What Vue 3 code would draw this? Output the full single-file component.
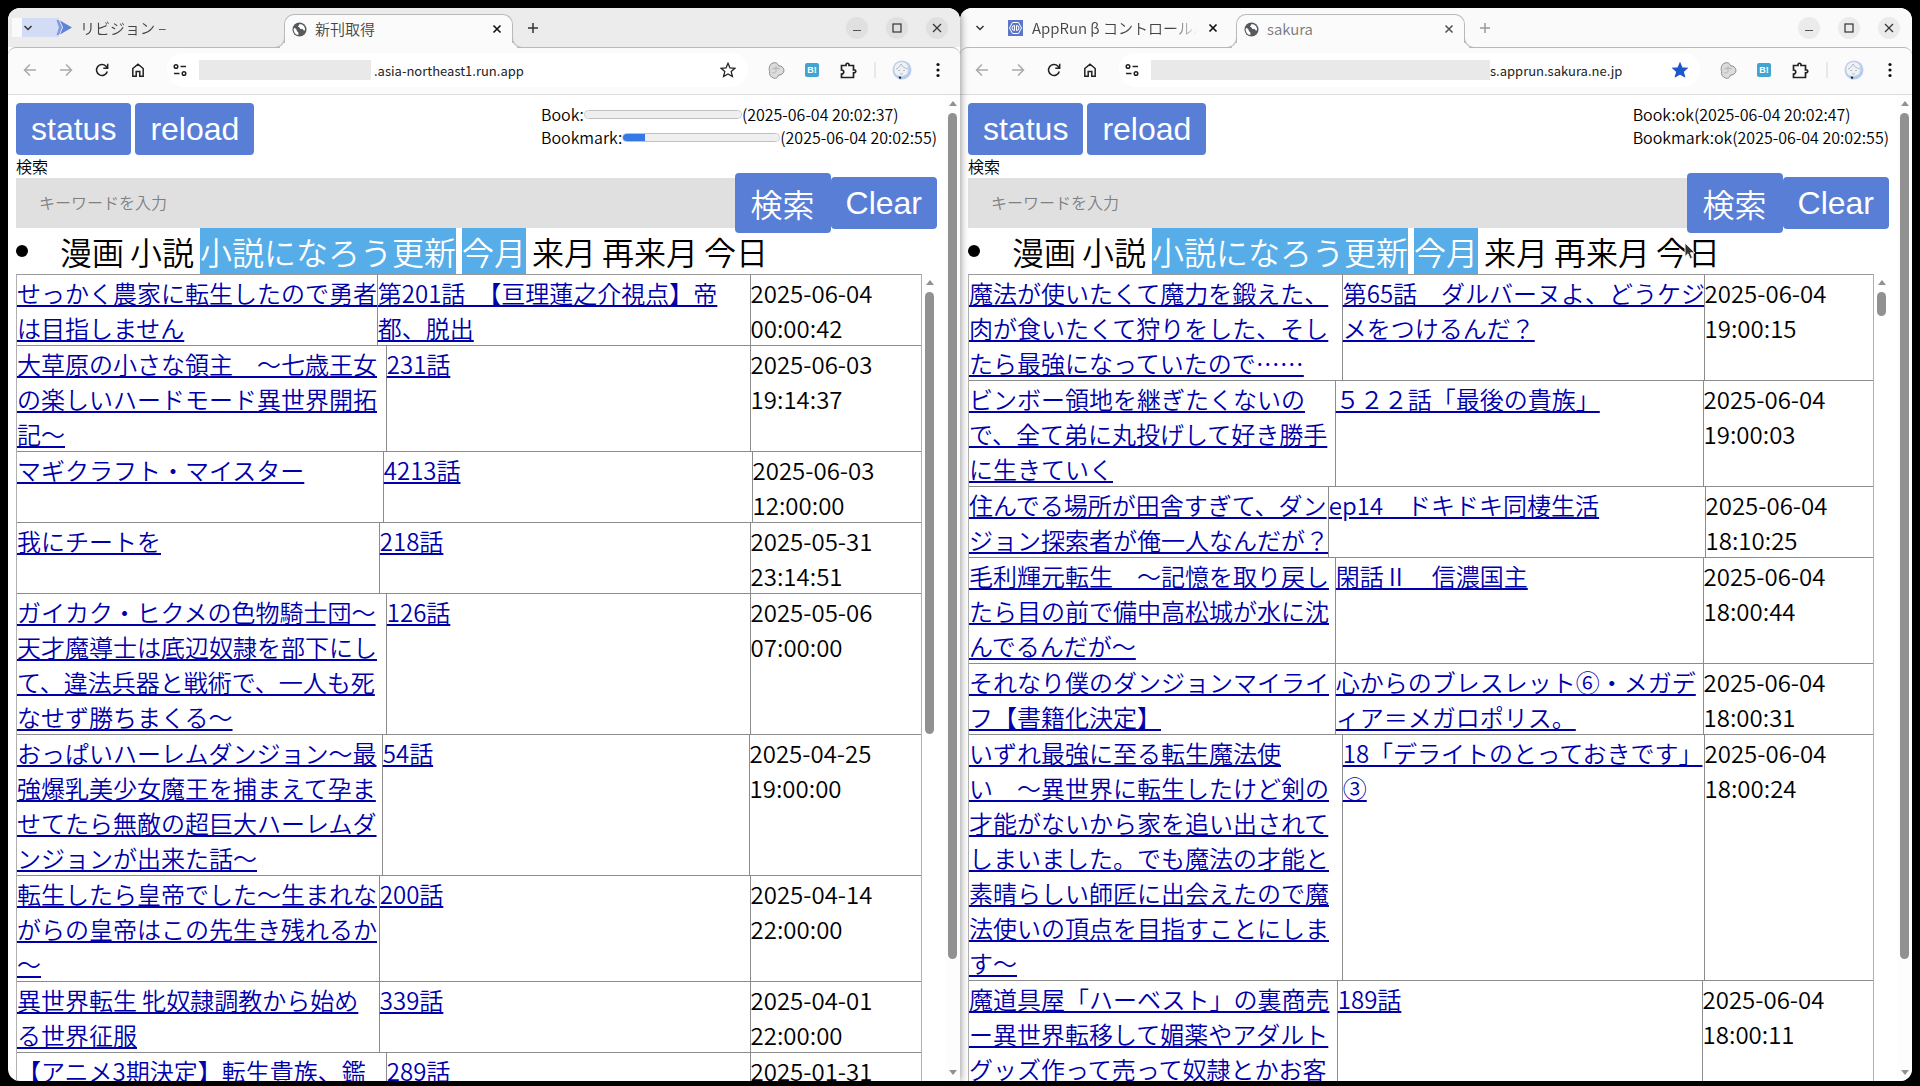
<script setup>
const filters = ['漫画', '小説', '小説になろう更新', '今月', '来月', '再来月', '今日']
const activeFilters = ['小説になろう更新', '今月']

const windows = [
  {
    id: 'cloudrun',
    focused: false,
    otherTab: 'リビジョン –',
    tab: '新刊取得',
    host: '.asia-northeast1.run.app',
    starred: false,
    thumb: 56,
    status: [
      { name: 'Book', progress: 0, time: '2025-06-04 20:02:37' },
      { name: 'Bookmark', progress: 14, time: '2025-06-04 20:02:55' },
    ],
    rows: [
      { cols: [361, 373, 171], title: 'せっかく農家に転生したので勇者は目指しません', episode: '第201話　【亘理蓮之介視点】帝都、脱出', date: '2025-06-04', time: '00:00:42' },
      { cols: [370, 364, 171], title: '大草原の小さな領主　～七歳王女の楽しいハードモード異世界開拓記～', episode: '231話', date: '2025-06-03', time: '19:14:37' },
      { cols: [367, 369, 169], title: 'マギクラフト・マイスター', episode: '4213話', date: '2025-06-03', time: '12:00:00' },
      { cols: [363, 371, 171], title: '我にチートを', episode: '218話', date: '2025-05-31', time: '23:14:51' },
      { cols: [370, 364, 171], title: 'ガイカク・ヒクメの色物騎士団～天才魔導士は底辺奴隷を部下にして、違法兵器と戦術で、一人も死なせず勝ちまくる～', episode: '126話', date: '2025-05-06', time: '07:00:00' },
      { cols: [366, 367, 172], title: 'おっぱいハーレムダンジョン～最強爆乳美少女魔王を捕まえて孕ませてたら無敵の超巨大ハーレムダンジョンが出来た話～', episode: '54話', date: '2025-04-25', time: '19:00:00' },
      { cols: [363, 371, 171], title: '転生したら皇帝でした～生まれながらの皇帝はこの先生き残れるか～', episode: '200話', date: '2025-04-14', time: '22:00:00' },
      { cols: [363, 371, 171], title: '異世界転生 牝奴隷調教から始め\nる世界征服', episode: '339話', date: '2025-04-01', time: '22:00:00' },
      { cols: [370, 364, 171], title: '【アニメ3期決定】転生貴族、鑑', episode: '289話', date: '2025-01-31', time: '' },
    ],
  },
  {
    id: 'apprun',
    focused: true,
    otherTab: 'AppRun β コントロールパネル',
    tab: 'sakura',
    host: 's.apprun.sakura.ne.jp',
    starred: true,
    thumb: 3,
    status: [
      { name: 'Book', result: 'ok', time: '2025-06-04 20:02:47' },
      { name: 'Bookmark', result: 'ok', time: '2025-06-04 20:02:55' },
    ],
    rows: [
      { cols: [374, 362, 169], title: '魔法が使いたくて魔力を鍛えた、肉が食いたくて狩りをした、そしたら最強になっていたので……', episode: '第65話　ダルバーヌよ、どうケジメをつけるんだ？', date: '2025-06-04', time: '19:00:15' },
      { cols: [367, 368, 170], title: 'ビンボー領地を継ぎたくないので、全て弟に丸投げして好き勝手に生きていく', episode: '５２２話「最後の貴族」', date: '2025-06-04', time: '19:00:03' },
      { cols: [360, 377, 168], title: '住んでる場所が田舎すぎて、ダンジョン探索者が俺一人なんだが？', episode: 'ep14　ドキドキ同棲生活', date: '2025-06-04', time: '18:10:25' },
      { cols: [367, 368, 170], title: '毛利輝元転生　～記憶を取り戻したら目の前で備中高松城が水に沈んでるんだが～', episode: '閑話Ⅱ　信濃国主', date: '2025-06-04', time: '18:00:44' },
      { cols: [367, 368, 170], title: 'それなり僕のダンジョンマイライフ【書籍化決定】', episode: '心からのブレスレット⑥・メガディア＝メガロポリス。', date: '2025-06-04', time: '18:00:31' },
      { cols: [374, 362, 169], title: 'いずれ最強に至る転生魔法使\nい　～異世界に転生したけど剣の才能がないから家を追い出されてしまいました。でも魔法の才能と素晴らしい師匠に出会えたので魔法使いの頂点を目指すことにします～', episode: '18「デライトのとっておきです」③', date: '2025-06-04', time: '18:00:24' },
      { cols: [369, 365, 171], title: '魔道具屋「ハーベスト」の裏商売ー異世界転移して媚薬やアダルトグッズ作って売って奴隷とかお客', episode: '189話', date: '2025-06-04', time: '18:00:11' },
    ],
  },
]
</script>

<template>
  <div class="desktop">
    <section v-for="win in windows" :key="win.id" class="window" :class="[win.id, { focused: win.focused }]">
      <header class="tabstrip">
        <button class="tab-search" aria-label="タブを検索">
          <svg width="10" height="10" viewBox="0 0 10 10"><path d="M1.5 3l3.5 3.5L8.5 3" fill="none" stroke="#333" stroke-width="1.5" /></svg>
        </button>
        <div class="tab idle">
          <span class="slot">
            <svg v-if="win.id === 'cloudrun'" width="28" height="19" viewBox="0 0 28 19">
              <rect width="15" height="19" fill="#d2dcf4" />
              <path d="M12.5 2h2.5l3 7.5-3 7.5h-2.5l2.5-7.5z" fill="#7f9adf" />
              <path d="M16 2.5 28 9.5 16 16.5 19 9.500z" fill="#5f83d8" />
            </svg>
            <svg v-else width="15" height="16" viewBox="0 0 15 16">
              <rect width="15" height="16" fill="#5c77c9" />
              <path d="M4.5 2.5h6L13.5 8l-3 5.5h-6L1.5 8z" fill="none" stroke="#fff" stroke-width="1" />
              <path d="M6.5 5.5a2.500 2.500 0 0 0 0 5zM8.500 5.500a2.500 2.500 0 0 1 0 5z" fill="none" stroke="#fff" stroke-width="1" />
            </svg>
          </span>
          <span class="tab-title fade">{{ win.otherTab }}</span>
          <button v-if="win.focused" class="close" aria-label="閉じる">
            <svg width="10" height="10" viewBox="0 0 10 10"><path d="M1.5 1.5l7 7M8.5 1.5l-7 7" stroke="#111" stroke-width="1.7" /></svg>
          </button>
        </div>
        <div class="tab active">
          <svg width="15" height="15" viewBox="0 0 16 16">
            <circle cx="8" cy="8" r="7.5" fill="#56595e" />
            <path d="M2 6.5c2 .2 3 1.5 3.200 2.800.2 1.200 1.600 1 1.700 2.300L6.700 14C4 13.500 1.700 11 1.800 8z" fill="#fff" />
            <path d="M8 2c.2 1.500-1.700 1.600-1.500 2.900.2 1 1.800.5 2 1.700.1 1 1.500 1.300 2.200.6 1 .1 1 1.600 2.200 1.900l1-.3C14.200 5 12 2.200 8 2z" fill="#fff" />
          </svg>
          <span class="tab-title">{{ win.tab }}</span>
          <button class="close" aria-label="閉じる">
            <svg width="10" height="10" viewBox="0 0 10 10"><path d="M1.5 1.5l7 7M8.5 1.5l-7 7" stroke="currentColor" stroke-width="1.6" /></svg>
          </button>
        </div>
        <button class="new-tab" aria-label="新しいタブ">
          <svg width="12" height="12" viewBox="0 0 12 12"><path d="M6 1v10M1 6h10" stroke="currentColor" stroke-width="1.5" /></svg>
        </button>
        <div class="controls">
          <button aria-label="最小化"><svg width="10" height="10" viewBox="0 0 10 10"><path d="M1 7.5h8" stroke="#555" stroke-width="1.2" /></svg></button>
          <button aria-label="最大化"><svg width="10" height="10" viewBox="0 0 10 10"><rect x="1" y="1" width="8" height="8" fill="none" stroke="#333" stroke-width="1.2" /></svg></button>
          <button aria-label="閉じる"><svg width="10" height="10" viewBox="0 0 10 10"><path d="M1 1l8 8M9 1l-8 8" stroke="#333" stroke-width="1.2" /></svg></button>
        </div>
      </header>

      <div class="toolbar">
        <button class="tool dim" aria-label="戻る"><svg width="14" height="14" viewBox="0 0 14 14"><path d="M13 7H2M7 1.5 1.5 7 7 12.5" /></svg></button>
        <button class="tool dim" aria-label="進む"><svg width="14" height="14" viewBox="0 0 14 14"><path d="M1 7h11M7 1.5 12.5 7 7 12.5" /></svg></button>
        <button class="tool" aria-label="再読み込み"><svg width="14" height="14" viewBox="0 0 14 14"><path d="M12.3 8.5A5.5 5.5 0 1 1 11 3.2L12.5 5M12.7.8V5.2H8.3" /></svg></button>
        <button class="tool" aria-label="ホーム"><svg width="14" height="14" viewBox="0 0 14 14"><path d="M1.8 5.5 7 1.2l5.200 4.300v7.700H8.800V8.500H5.200v4.700H1.800z" /></svg></button>
        <div class="omnibox">
          <button class="site" aria-label="サイト情報"><svg width="14" height="14" viewBox="0 0 14 14"><circle cx="3" cy="3.5" r="1.8" /><path d="M7.5 3.5H13M1 10.5h5.5" /><circle cx="11" cy="10.5" r="1.8" /></svg></button>
          <span class="masked"></span>
          <input class="address" type="text" :value="win.host" aria-label="アドレス" />
          <button class="star" aria-label="ブックマーク">
            <svg width="16" height="16" viewBox="0 0 16 16"><path d="M8 1.3l2 4.600 5 .4-3.800 3.300 1.200 4.900L8 11.900l-4.400 2.600 1.200-4.900L1 6.300l5-.4z" :fill="win.starred ? '#1d57c9' : 'none'" :stroke="win.starred ? '#1d57c9' : '#222'" stroke-width="1.3" /></svg>
          </button>
        </div>
        <button class="tool" aria-label="拡張機能 1">
          <svg width="17" height="17" viewBox="0 0 17 17"><path d="M5 1C8 0 10 1.5 10.5 3.8 13 3.5 16 5.5 16 8.5s-3 4.700-5.500 4.500C10 15.500 8 17 5.500 16 2.500 15 1 12.500 1.600 9.500.5 6 1.500 2 5 1z" fill="#dcdcdc" stroke="#8c8c8c" stroke-width="1" /><path d="M8 4v5c0 2-3 3-4 1M4 7c2-1 6-1 8 0" fill="none" stroke="#b4b4b4" stroke-width="1" /></svg>
        </button>
        <button class="tool" aria-label="はてなブックマーク"><span class="hatena">B!</span></button>
        <button class="tool" aria-label="拡張機能"><svg width="17" height="17" viewBox="0 0 17 17"><path d="M1.5 3.5H6c-.3-3 3.300-3 3 0h4.500v4.300c3-.3 3 3.300 0 3V15.500h-12V12c3 .2 3-4.300 0-4z" stroke-width="1.7" /></svg></button>
        <span class="divider"></span>
        <button class="tool" aria-label="プロフィール">
          <svg width="20" height="20" viewBox="0 0 20 20"><circle cx="10" cy="10" r="9.5" fill="#b5cdf3" stroke="none" /><path d="M2 11C1 5 5 1.5 9.5 1.7 14 1.5 17.5 5 16.5 10.5 16 15 13 16 9 16.5 5 16 3 15 2 11z" fill="#eef1f5" stroke="#c6cfdb" stroke-width="1" /><path d="M4 9c3-1 4-3 5-5 1 3 4 4 7 5M6 10.500h2M11 10.500h2M8 13.500q1.500 1 3 0" fill="none" stroke="#b4bcc8" stroke-width="1" /><path d="M6.500 16.500l1.500 3L9.500 17z" fill="#111" stroke="none" /></svg>
        </button>
        <button class="tool" aria-label="メニュー"><svg width="4" height="16" viewBox="0 0 4 16"><g fill="#111" stroke="none"><circle cx="2" cy="2.5" r="1.6" /><circle cx="2" cy="8" r="1.6" /><circle cx="2" cy="13.5" r="1.6" /></g></svg></button>
      </div>

      <div class="viewport">
        <main class="page">
          <div class="actions">
            <div class="buttons">
              <button class="btn">status</button>
              <button class="btn">reload</button>
            </div>
            <div class="status">
              <div v-for="s in win.status" :key="s.name" class="status-line">
                <span>{{ s.name }}:</span>
                <span v-if="s.result">{{ s.result }}</span>
                <progress v-else :value="s.progress" max="100" :aria-label="s.name"></progress>
                <span>({{ s.time }})</span>
              </div>
            </div>
          </div>
          <form class="search" @submit.prevent>
            <label :for="win.id + '-keyword'">検索</label>
            <div class="search-row">
              <input :id="win.id + '-keyword'" type="text" placeholder="キーワードを入力" />
              <button class="btn ja" type="submit">検索</button>
              <button class="btn" type="reset">Clear</button>
            </div>
          </form>
          <nav class="filters">
            <span class="bullet"></span>
            <span v-for="f in filters" :key="f" class="filter" :class="{ on: activeFilters.includes(f) }">{{ f }}<svg v-if="win.focused && f === '今日'" class="pointer" width="12" height="18" viewBox="0 0 12 18"><path d="M1 1v13.500l3-2.800 2.200 5 2.300-1-2.200-4.900H11z" fill="#333" stroke="#eee" stroke-width="1" /></svg></span>
          </nav>
          <div class="list">
            <table>
              <tbody>
                <tr v-for="row in win.rows" :key="row.title">
                  <td :style="{ flexGrow: row.cols[0] }"><a href="#">{{ row.title }}</a></td>
                  <td :style="{ flexGrow: row.cols[1] }"><a href="#">{{ row.episode }}</a></td>
                  <td :style="{ flexGrow: row.cols[2] }">{{ row.date }}<br />{{ row.time }}</td>
                </tr>
              </tbody>
            </table>
            <div class="scrollbar">
              <i class="up"></i>
              <div class="track"><div class="thumb" :style="{ height: win.thumb + '%' }"></div></div>
            </div>
          </div>
        </main>
        <div class="scrollbar outer">
          <i class="up"></i>
          <div class="track"><div class="thumb" :style="{ height: '89%' }"></div></div>
          <i class="down"></i>
        </div>
      </div>
    </section>
  </div>
</template>

<style>
body {
  margin: 0;
  background: #000;
}
</style>

<style scoped>
.desktop {
  display: flex;
  box-sizing: border-box;
  height: 100vh;
  padding: 8px 8px 5px;
  background: #000;
  font-family: "Noto Sans CJK JP", "Noto Sans", sans-serif;
  font-weight: 350;
  color: #000;
}
.window {
  flex: 1 1 0;
  min-width: 0;
  display: flex;
  flex-direction: column;
  overflow: hidden;
  background: #fff;
}
.cloudrun {
  position: relative;
  z-index: 1;
  border-radius: 12px 12px 0 12px;
  box-shadow: 0 0 8px rgba(0, 0, 0, 0.5);
}
.apprun {
  border-radius: 12px 12px 12px 0;
}
button {
  margin: 0;
  padding: 0;
  border: 0;
  background: none;
  color: inherit;
  font-family: inherit;
}
svg {
  display: block;
}

.tabstrip {
  display: flex;
  align-items: center;
  height: 39px;
  background: #ececec;
}
.focused .tabstrip {
  background: #fafafa;
}
.tab-search {
  display: flex;
  align-items: center;
  justify-content: center;
  width: 32px;
  height: 19px;
  margin-left: 4px;
  background: linear-gradient(90deg, #fafafa 10px, #d2dcf4 10px);
}
.focused .tab-search {
  background: none;
}
.tab {
  display: flex;
  align-items: center;
  box-sizing: border-box;
}
.idle {
  width: 240px;
  padding-right: 15px;
}
.slot {
  display: flex;
  width: 36px;
}
.focused .slot {
  box-sizing: border-box;
  padding-left: 12px;
}
.tab-title {
  flex: 1;
  overflow: hidden;
  white-space: nowrap;
  font-size: 15px;
  line-height: 24px;
  color: #444;
}
.fade {
  margin-right: 8px;
  mask-image: linear-gradient(90deg, #000 85%, transparent);
}
.active {
  position: relative;
  align-self: flex-end;
  gap: 8px;
  width: 229px;
  height: 34px;
  margin-bottom: -1px;
  padding: 0 7px 5px;
  border: 1px solid #b9b9b9;
  border-bottom: 0;
  border-radius: 10px 10px 0 0;
  background: #fbfbfb;
}
.focused .active .tab-title {
  color: #777;
}
.active::before,
.active::after {
  content: "";
  position: absolute;
  bottom: 0;
  box-sizing: border-box;
  width: 10px;
  height: 10px;
  border-bottom: 1px solid #b9b9b9;
  clip-path: inset(0);
}
.active::before {
  left: -10px;
  border-right: 1px solid #b9b9b9;
  border-bottom-right-radius: 10px;
  box-shadow: 5px 5px 0 #fbfbfb;
}
.active::after {
  right: -10px;
  border-left: 1px solid #b9b9b9;
  border-bottom-left-radius: 10px;
  box-shadow: -5px 5px 0 #fbfbfb;
}
.close {
  display: flex;
  align-items: center;
  justify-content: center;
  width: 16px;
  height: 16px;
  color: #111;
}
.new-tab {
  display: flex;
  align-items: center;
  justify-content: center;
  width: 40px;
  height: 30px;
  color: #333;
}
.focused .active .close {
  color: #555;
}
.focused .new-tab {
  color: #999;
}
.controls {
  display: flex;
  gap: 18px;
  margin-left: auto;
  margin-right: 12px;
}
.controls button {
  display: flex;
  align-items: center;
  justify-content: center;
  width: 22px;
  height: 22px;
  border-radius: 50%;
  background: #e0e0e0;
}
.focused .controls button {
  background: #ebebeb;
}

.toolbar {
  display: flex;
  align-items: center;
  box-sizing: border-box;
  height: 48px;
  padding: 0 4px 2px;
  border-top: 1px solid #b9b9b9;
  border-bottom: 1px solid #dcdcdc;
  border-radius: 8px 8px 0 0;
  background: #fbfbfb;
}
.tool {
  display: flex;
  flex: none;
  align-items: center;
  justify-content: center;
  width: 36px;
  height: 34px;
}
.tool svg,
.site svg {
  fill: none;
  stroke: #222;
  stroke-width: 1.5;
}
.dim svg {
  stroke: #aaa;
}
.omnibox {
  flex: 1;
  display: flex;
  align-items: center;
  min-width: 0;
  height: 34px;
  margin: 0 10px 0 11px;
  border-radius: 17px;
  background: #fff;
}
.site {
  padding: 0 12px 0 6px;
}
.masked {
  flex: none;
  width: 172px;
  height: 20px;
  background: #e9e9e9;
}
.apprun .masked {
  width: 339px;
}
.address {
  flex: 1;
  min-width: 0;
  height: 24px;
  padding: 0 0 0 3px;
  border: 0;
  outline: 0;
  background: transparent;
  color: #222;
  font-family: inherit;
  font-size: 13px;
}
.apprun .address {
  padding-left: 0;
}
.star {
  margin-right: 12px;
}
.hatena {
  width: 14px;
  height: 14px;
  border-radius: 2px;
  background: #42a5d1;
  color: #fff;
  font: bold 9px/14px "Liberation Sans", sans-serif;
  text-align: center;
}
.divider {
  flex: none;
  width: 2px;
  height: 16px;
  margin: 0 8px;
  background: #e8e8e8;
}

.viewport {
  flex: 1;
  display: flex;
  min-height: 0;
}
.page {
  flex: 1;
  display: flex;
  flex-direction: column;
  min-width: 0;
  min-height: 0;
  padding: 8px 8px 0;
}
.actions {
  display: flex;
  justify-content: space-between;
}
.buttons {
  display: flex;
  gap: 4px;
}
.btn {
  flex: none;
  padding: 8px 15px;
  border-radius: 4px;
  background: #587ed6;
  color: #fff;
  font-family: "Liberation Sans", Arial, sans-serif;
  font-size: 32px;
  line-height: 36px;
}
.btn.ja {
  padding: 8px 16px;
  font-family: "Noto Sans CJK JP", sans-serif;
  font-weight: inherit;
  line-height: 44px;
}
.status {
  font-size: 16px;
  line-height: 23px;
}
.status-line {
  display: flex;
  align-items: center;
  height: 23px;
}
progress {
  appearance: none;
  box-sizing: border-box;
  width: 158px;
  height: 9px;
  border: 1px solid #c0c0c0;
  border-radius: 5px;
  overflow: hidden;
  background: #efefef;
}
progress::-webkit-progress-bar {
  background: #efefef;
}
progress::-webkit-progress-value {
  background: #3579e6;
}
.search label {
  display: block;
  font-size: 16px;
  line-height: 23px;
}
.search-row {
  display: flex;
  align-items: center;
  height: 50px;
}
.search-row input {
  flex: 1;
  min-width: 0;
  box-sizing: border-box;
  height: 50px;
  padding: 0 23px 2px;
  border: 0;
  border-radius: 0;
  background: #e0e0e0;
  font-family: inherit;
  font-weight: inherit;
  font-size: 16px;
}
.search-row input::placeholder {
  color: #808080;
}
.filters {
  display: flex;
  align-items: center;
  gap: 6px;
  height: 46px;
  font-size: 32px;
  line-height: 46px;
}
.bullet {
  width: 12px;
  height: 12px;
  margin-right: 26px;
  border-radius: 50%;
  background: #000;
}
.filter {
  position: relative;
  white-space: nowrap;
}
.on {
  background: #57ade8;
  color: #fff;
}
.pointer {
  position: absolute;
  left: 28px;
  top: 14px;
}

.list {
  flex: 1;
  display: flex;
  min-height: 0;
  overflow: hidden;
}
table {
  flex: 1;
  display: block;
  align-self: flex-start;
  min-width: 0;
  box-sizing: border-box;
  border: 1px solid #b0b0b0;
  border-top-color: #999;
}
tbody {
  display: block;
}
tr {
  display: flex;
  border-bottom: 1px solid #8c8c8c;
}
td {
  flex: 1 1 0;
  min-width: 0;
  padding: 0;
  font-size: 24px;
  line-height: 35px;
}
td + td {
  border-left: 1px solid #8c8c8c;
}
td a {
  display: block;
  margin-right: -4px;
  color: #0000aa;
  text-decoration: underline;
  white-space: pre-line;
}

.scrollbar {
  flex: none;
  display: flex;
  flex-direction: column;
  width: 15px;
}
.outer {
  background: #fdfdfd;
}
.track {
  flex: 1;
  padding: 0 3px;
}
.thumb {
  border-radius: 5px;
  background: #919191;
}
.up,
.down {
  flex: none;
  width: 0;
  height: 0;
  margin: 6px auto 7px;
  border: solid transparent;
  border-width: 0 4px 5px;
  border-bottom-color: #919191;
}
.down {
  margin: 7px auto 6px;
  border-width: 5px 4px 0;
  border-top-color: #919191;
}
</style>
